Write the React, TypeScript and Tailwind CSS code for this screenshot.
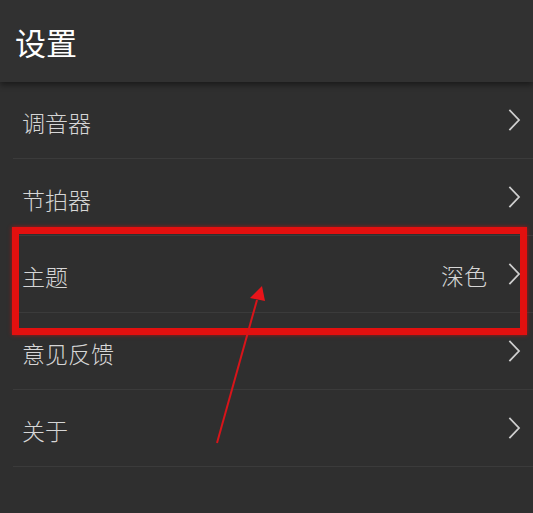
import { ReactNode } from 'react'

const font = { fontFamily: '"Noto Sans CJK SC", "Noto Sans", sans-serif' }

function Chevron() {
  return (
    <svg width="13" height="22" viewBox="0 0 13 22" fill="none" className="shrink-0">
      <path d="M2 1.5 L11 11 L2 20.5" stroke="#cfcfcf" strokeWidth="1.8" strokeLinecap="square" />
    </svg>
  )
}

function Row({ label, value }: { label: string; value?: ReactNode }) {
  return (
    <div className="h-[77px] flex items-center justify-between pl-[9px] pr-[12px] border-b border-[#3b3b3b]">
      <span className="text-[23px] font-light text-[#d6d6d6] pt-[5px]">{label}</span>
      <div className="flex items-center gap-[21px]">
        {value && <span className="text-[23px] font-light text-[#d6d6d6] pt-[3px]">{value}</span>}
        <Chevron />
      </div>
    </div>
  )
}

export default function App() {
  return (
    <div className="relative w-full h-[513px] overflow-hidden bg-[#2f2f2f]" style={font}>
      <header className="h-[82px] flex items-center pl-[15px] bg-[#313131] shadow-[0_3px_6px_rgba(0,0,0,0.45)] relative z-10">
        <span className="text-[31px] text-white leading-none">设置</span>
      </header>

      <div className="pl-[13px]">
        <Row label="调音器" />
        <Row label="节拍器" />
        <Row label="主题" value="深色" />
        <Row label="意见反馈" />
        <Row label="关于" />
      </div>

      {/* annotation: highlight box */}
      <div className="absolute left-[12px] top-[227px] w-[515px] h-[108px] border-[7px] border-[#e3100f] shadow-[0_0_4px_rgba(255,0,0,0.6)] pointer-events-none" />

      {/* annotation: arrow */}
      <svg className="absolute inset-0 pointer-events-none" width="533" height="513" viewBox="0 0 533 513">
        <line x1="217" y1="443" x2="257" y2="300" stroke="#d8141a" strokeWidth="2" />
        <polygon points="262,286 250,298 265,301" fill="#e8141a" />
      </svg>
    </div>
  )
}
